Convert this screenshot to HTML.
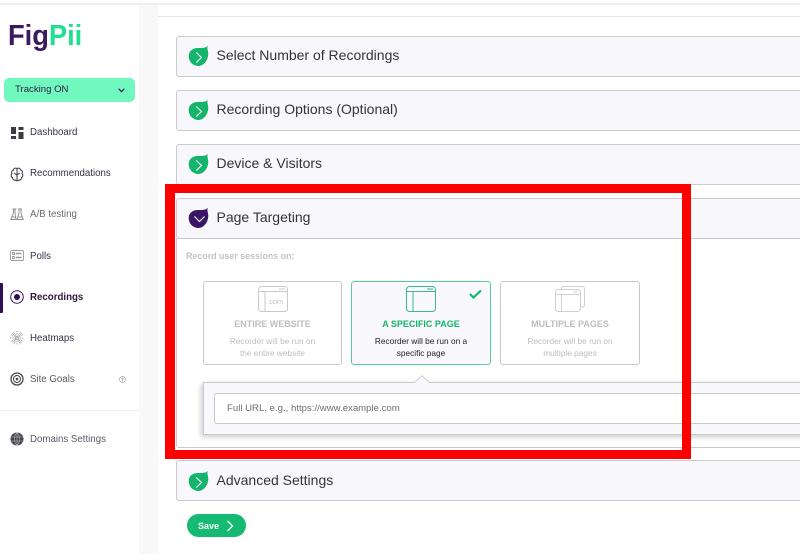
<!DOCTYPE html>
<html><head><meta charset="utf-8">
<style>
html,body{margin:0;padding:0;background:#fff}
body{position:relative;width:800px;height:554px;overflow:hidden;font-family:"Liberation Sans",sans-serif;filter:blur(.3px)}
.a{position:absolute}
.t{position:absolute;white-space:nowrap}
.nav{position:absolute;left:30px;font-size:9.7px;color:#3a3048;white-space:nowrap;line-height:12px}
.panel{position:absolute;left:176px;width:640px;height:39px;background:#f7f7fc;border:1px solid #cbcbcb;border-radius:3px}
.ptitle{position:absolute;left:216.5px;font-size:14px;color:#33333a;white-space:nowrap;line-height:18px;letter-spacing:0}
.drop{position:absolute;left:188px;width:21px;height:21px}
.card{position:absolute;top:281px;width:137px;height:82px;border:1px solid #c9c9c9;border-radius:3px;background:#fff;text-align:center;color:#bdbdbd}
.card .h{position:absolute;left:0;right:0;top:36px;font-size:9px;font-weight:bold;line-height:12px}
.card .d{position:absolute;left:0;right:0;top:53px;font-size:8.3px;line-height:12.3px}
svg{position:absolute;overflow:visible}
</style></head><body>
<div class="a" style="left:0;top:3px;width:800px;height:2px;background:#efeff1"></div>
<div class="a" style="left:139px;top:5px;width:19px;height:549px;background:#f8f8f8"></div>
<div class="a" style="left:158px;top:16px;width:642px;height:1px;background:#e6e6ea"></div>

<div class="t" style="left:8px;top:19px;font-size:29px;font-weight:bold;line-height:34px;transform:scaleX(.94);transform-origin:0 0;color:#3b1a5e">Fig<span style="color:#1fe08f">Pii</span></div>

<div class="a" style="left:4px;top:78px;width:131px;height:24px;background:#71f8bf;border-radius:5px"></div>
<div class="t" style="left:15px;top:83px;font-size:9.6px;line-height:13px;color:#2d2140">Tracking ON</div>
<svg style="left:118px;top:88px" width="7" height="5" viewBox="0 0 7 5"><path d="M.7 .8L3.5 3.6L6.3 .8" fill="none" stroke="#2d1a4a" stroke-width="1.2"/></svg>

<svg style="left:10px;top:126px" width="15" height="14" viewBox="0 0 15 14" fill="#3a3a42"><rect x="1" y="1" width="5" height="7"/><rect x="8.500" y="1" width="5" height="3"/><rect x="1" y="10" width="5" height="3"/><rect x="8.500" y="6" width="5" height="7"/></svg>
<div class="nav" style="top:127px">Dashboard</div>

<svg style="left:10px;top:166.500px" width="14" height="15" viewBox="0 0 14 15" fill="none" stroke="#3a3a42" stroke-width="1"><path d="M7 1.500C5 .5 3.500 1.500 3.500 3C1.500 3.500 1 5.500 2 6.500C.5 8 1 10 2.500 10.500C2.500 12.500 4 13.800 5.500 13C6.200 14 7 13.800 7 13.500C7.500 14 9 13.800 9 13C10.500 13.500 11.500 12 11.500 10.500C13 10 13.500 8 12 6.500C13 5.500 12.500 3.500 10.500 3C10.500 1.500 9 .5 7 1.500ZM7 1.500V13.500M4 6L7 8M10 6L7 8"/></svg>
<div class="nav" style="top:168px">Recommendations</div>

<svg style="left:10px;top:208px" width="14" height="13" viewBox="0 0 14 13" fill="none" stroke="#8c8c8c" stroke-width=".9"><path d="M2.500 1H6.500M8 1H12M3.500 1V5L.7 11.500H6L5 5V1M9 1V5L7 11.500H13.300L11 5V1M2 9H5.500M8.500 9H12.500"/></svg>
<div class="nav" style="top:209px;color:#6c6872">A/B testing</div>

<svg style="left:10px;top:250px" width="14" height="12" viewBox="0 0 14 12" fill="none" stroke="#9a9a9a" stroke-width=".9"><rect x=".5" y=".5" width="13" height="10" rx="1.500"/><rect x="2.500" y="2.500" width="2" height="2"/><rect x="2.500" y="6.500" width="2" height="2"/><path d="M6 3.500H11.500M6 7.500H11.500" stroke-width="1.400"/></svg>
<div class="nav" style="top:251px">Polls</div>

<div class="a" style="left:0;top:283px;width:3px;height:30px;background:#2f0f58;border-radius:0 1px 1px 0"></div>
<svg style="left:10px;top:290px" width="14" height="14" viewBox="0 0 14 14"><circle cx="7" cy="7" r="6.300" fill="none" stroke="#3b1a5e" stroke-width="1"/><circle cx="7" cy="7" r="3" fill="#2f0f58"/></svg>
<div class="nav" style="top:292px;font-weight:bold;color:#2a1a3e">Recordings</div>

<svg style="left:10px;top:331px" width="14" height="14" viewBox="0 0 14 14" fill="none" stroke="#a5a5a5" stroke-width="1" stroke-dasharray="1 .7"><path d="M7 0V14M0 7H14M2 2L12 12M12 2L2 12M3.500 .7L10.500 13.300M10.500 .7L3.500 13.300M.7 3.500L13.300 10.500M13.300 3.500L.7 10.500"/></svg>
<div class="nav" style="top:333px">Heatmaps</div>

<svg style="left:10px;top:372px" width="14" height="14" viewBox="0 0 14 14" fill="none" stroke="#45454a"><circle cx="7" cy="7" r="6" stroke-width="1.300"/><circle cx="7" cy="7" r="3.500" stroke-width="1"/><circle cx="7" cy="7" r="1.300" fill="#45454a" stroke="none"/></svg>
<div class="nav" style="top:374px;color:#5c5866">Site Goals</div>
<svg style="left:119px;top:376px" width="7" height="7" viewBox="0 0 7 7" fill="none" stroke="#a5a5a5" stroke-width=".7"><circle cx="3.500" cy="3.500" r="3"/><path d="M2.500 2.800L3.500 1.800L4.500 2.800M3.500 2V5.200"/></svg>

<div class="a" style="left:0;top:410px;width:139px;height:1px;background:#ececec"></div>
<svg style="left:10px;top:432px" width="14" height="14" viewBox="0 0 14 14"><circle cx="7" cy="7" r="6.500" fill="#45454c"/><path d="M.5 5H13.500M.5 9H13.500M7 .5V13.500M7 .5C3.500 4 3.500 10 7 13.500M7 .5C10.500 4 10.500 10 7 13.500" fill="none" stroke="#b9b9bc" stroke-width=".6"/></svg>
<div class="nav" style="top:434px;color:#5c5866">Domains Settings</div>

<div class="panel" style="top:36px"></div>
<div class="panel" style="top:90px"></div>
<div class="panel" style="top:144px"></div>
<div class="panel" style="top:198px"></div>
<div class="a" style="left:176px;top:238px;width:640px;height:208px;background:#fff;border:1px solid #cbcbcb;border-radius:0 0 3px 3px"></div>
<div class="panel" style="top:460px"></div>

<svg class="drop" style="top:45px" viewBox="0 0 21 21"><path d="M20 .8C19 2.500 19.500 4 20 6.500C21.500 13 16.500 21 10.500 21C5 21 .7 16.500 .7 11C.7 6 5 3 9.500 3C13.500 3 17.500 3.500 20 .8Z" fill="#14b46c"/><path d="M8.300 7.500L13.500 12.500L8.300 17.500" fill="none" stroke="#fff" stroke-width="1.100"/></svg>
<div class="ptitle" style="top:46px">Select Number of Recordings</div>
<svg class="drop" style="top:99px" viewBox="0 0 21 21"><path d="M20 .8C19 2.500 19.500 4 20 6.500C21.500 13 16.500 21 10.500 21C5 21 .7 16.500 .7 11C.7 6 5 3 9.500 3C13.500 3 17.500 3.500 20 .8Z" fill="#14b46c"/><path d="M8.300 7.500L13.500 12.500L8.300 17.500" fill="none" stroke="#fff" stroke-width="1.100"/></svg>
<div class="ptitle" style="top:100px">Recording Options (Optional)</div>
<svg class="drop" style="top:153px" viewBox="0 0 21 21"><path d="M20 .8C19 2.500 19.500 4 20 6.500C21.500 13 16.500 21 10.500 21C5 21 .7 16.500 .7 11C.7 6 5 3 9.500 3C13.500 3 17.500 3.500 20 .8Z" fill="#14b46c"/><path d="M8.300 7.500L13.500 12.500L8.300 17.500" fill="none" stroke="#fff" stroke-width="1.100"/></svg>
<div class="ptitle" style="top:154px">Device &amp; Visitors</div>
<svg class="drop" style="top:207px" viewBox="0 0 21 21"><path d="M20 .8C19 2.500 19.500 4 20 6.500C21.500 13 16.500 21 10.500 21C5 21 .7 16.500 .7 11C.7 6 5 3 9.500 3C13.500 3 17.500 3.500 20 .8Z" fill="#3a1566"/><path d="M6.500 9.500L11.500 14.500L16.500 9.500" fill="none" stroke="#fff" stroke-width="1.100"/></svg>
<div class="ptitle" style="top:208px">Page Targeting</div>
<svg class="drop" style="top:470px" viewBox="0 0 21 21"><path d="M20 .8C19 2.500 19.500 4 20 6.500C21.500 13 16.500 21 10.500 21C5 21 .7 16.500 .7 11C.7 6 5 3 9.500 3C13.500 3 17.500 3.500 20 .8Z" fill="#14b46c"/><path d="M8.300 7.500L13.500 12.500L8.300 17.500" fill="none" stroke="#fff" stroke-width="1.100"/></svg>
<div class="ptitle" style="top:471px">Advanced Settings</div>

<div class="t" style="left:186px;top:250px;font-size:8.900px;font-weight:bold;line-height:12px;color:#c4c4c4">Record user sessions on:</div>

<div class="card" style="left:203px">
<div class="h">ENTIRE WEBSITE</div>
<div class="d">Recorder will be run on<br>the entire website</div>
</div>
<svg style="left:258px;top:286px" width="30" height="26" viewBox="0 0 30 26" fill="none" stroke="#c9c9c9" stroke-width="1"><rect x=".5" y=".5" width="29" height="25" rx="3"/><path d="M.5 5.500H29.500M7 5.500V25.500M21 3H27" /><text x="9" y="18" font-family="Liberation Sans" font-size="7.500" fill="#c4c4c4" stroke="none">.com</text></svg>

<div class="card" style="left:351px;width:138px;background:#f8f8fd;border-color:#52cf99;color:#222">
<div class="h" style="color:#14b46c">A SPECIFIC PAGE</div>
<div class="d" style="color:#222">Recorder will be run on a<br>specific page</div>
</div>
<svg style="left:406px;top:286px" width="30" height="26" viewBox="0 0 30 26" fill="none" stroke="#3cb98a" stroke-width="1"><rect x=".5" y=".5" width="29" height="25" rx="3"/><path d="M.5 5.500H29.500M7 5.500V25.500M21 3H27"/></svg>
<svg style="left:469px;top:289px" width="13" height="10" viewBox="0 0 13 10"><path d="M1 5L4.500 8.500L12 1.500" fill="none" stroke="#14b46c" stroke-width="2.200"/></svg>

<div class="card" style="left:500px;width:138px">
<div class="h">MULTIPLE PAGES</div>
<div class="d">Recorder will be run on<br>multiple pages</div>
</div>
<svg style="left:555px;top:286px" width="30" height="26" viewBox="0 0 30 26" fill="none" stroke="#cfcfcf" stroke-width="1"><path d="M6.500 3V2.500Q6.500 .5 8.500 .5H27Q29.500 .5 29.500 3V19Q29.500 21 27 21H26"/><rect x=".5" y="3.500" width="25" height="22" rx="3" fill="#fff"/><path d="M.5 8.500H25.500M6.500 8.500V25.500M18 6H23"/></svg>

<div class="a" style="left:203px;top:382px;width:620px;height:51px;background:#f8f8fd;border:1px solid #c9c9c9;box-shadow:-2px 2px 5px rgba(0,0,0,.2)"></div>
<svg style="left:414px;top:375px" width="16" height="9" viewBox="0 0 16 9"><path d="M0 8L8 .7L16 8" fill="#f8f8fd" stroke="#d0d0d0" stroke-width="1"/><path d="M0 9H16V8H0Z" fill="#f8f8fd"/></svg>
<div class="a" style="left:214px;top:393px;width:620px;height:29px;background:#fff;border:1px solid #c9c9c9;border-radius:3px"></div>
<div class="t" style="left:227px;top:402px;font-size:9.600px;line-height:14px;color:#6e6e73">Full URL, e.g., https://www.example.com</div>

<div class="a" style="left:187px;top:514px;width:59px;height:23px;background:#14ba71;border-radius:12px"></div>
<div class="t" style="left:198px;top:520px;font-size:9px;font-weight:bold;line-height:12px;color:#fff">Save</div>
<svg style="left:226px;top:520px" width="8" height="12" viewBox="0 0 8 12"><path d="M1.500 1L6.500 6L1.500 11" fill="none" stroke="#fff" stroke-width="1.300"/></svg>

<div class="a" style="left:165px;top:184px;width:526px;height:275px;box-sizing:border-box;border:9px solid #fe0000;border-left-width:10px"></div>
</body></html>
